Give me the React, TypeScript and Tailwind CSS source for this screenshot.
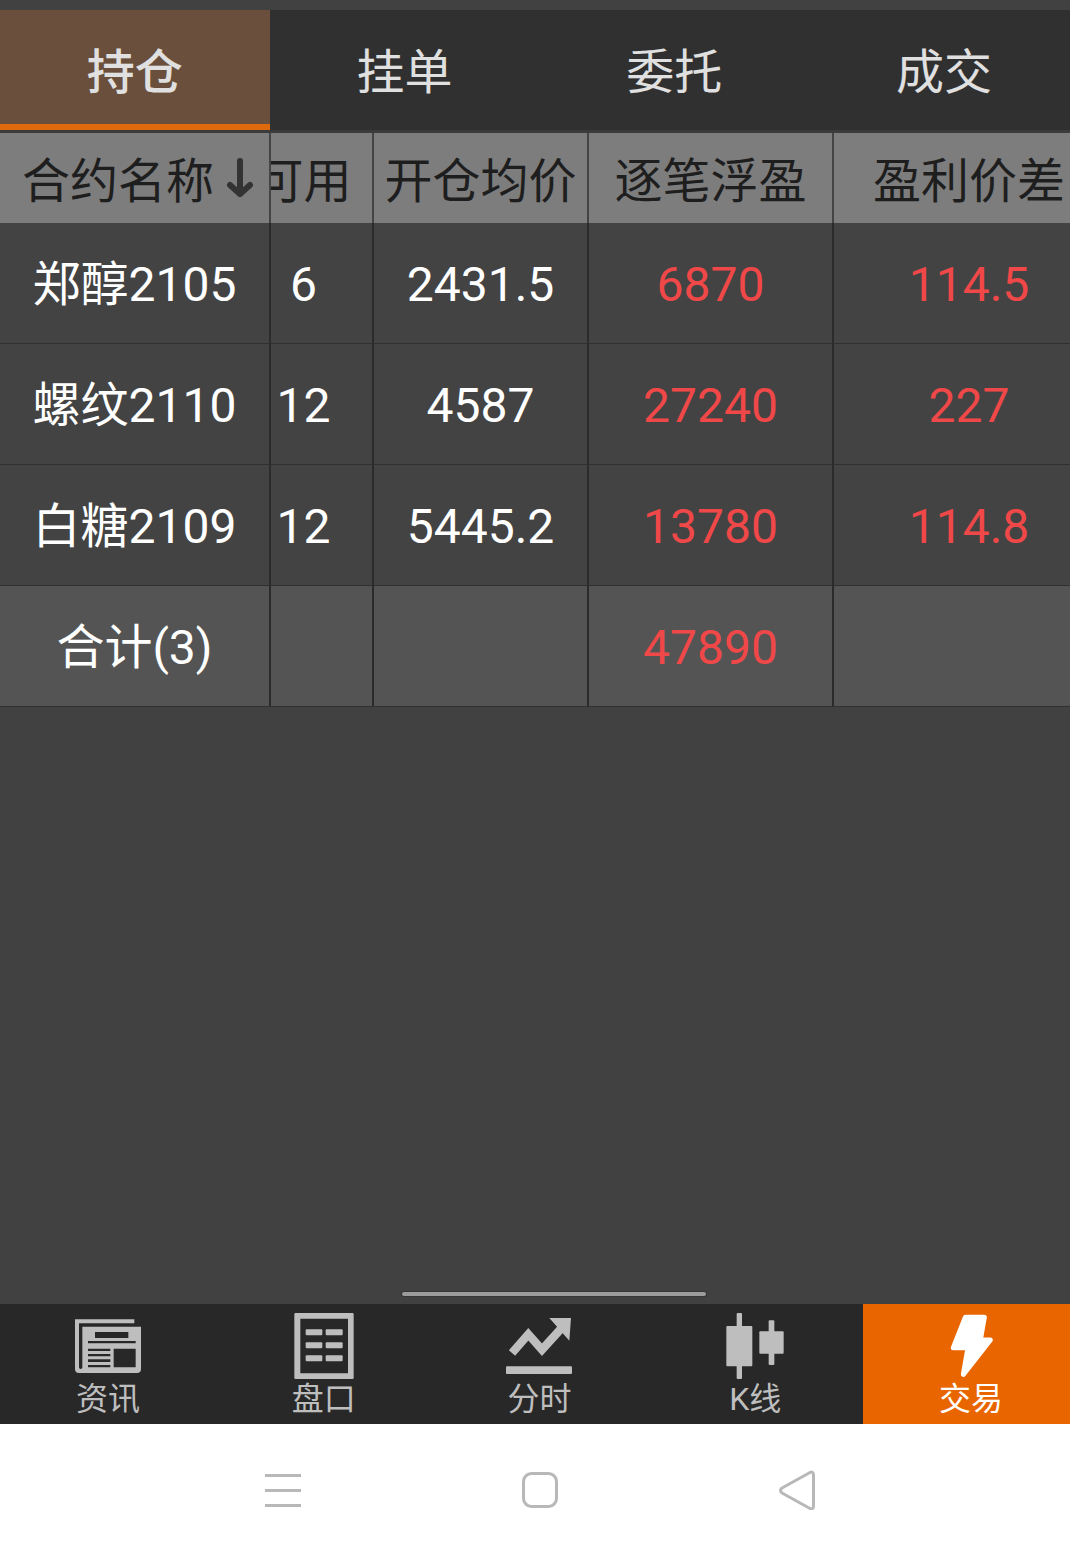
import { useState } from "react";
import type { ReactNode } from "react";

const tabs = ["持仓", "挂单", "委托", "成交"];

const positions = [
  { name: "郑醇2105", available: "6", price: "2431.5", profit: "6870", spread: "114.5" },
  { name: "螺纹2110", available: "12", price: "4587", profit: "27240", spread: "227" },
  { name: "白糖2109", available: "12", price: "5445.2", profit: "13780", spread: "114.8" },
];

const NewsIcon = () => (
  <path
    fillRule="evenodd"
    d="M0 19H178V31H12V163Q12 168 17 168Q22 168 22 163V41H198V168Q198 180 186 180H12Q0 180 0 168ZM60 57V75H160V57ZM39 84V91H182V84ZM39 107V114H106V107ZM39 123V130H106V123ZM39 139V147H106V139ZM39 156V163H106V156ZM116 107V163H182V107Z"
  />
);

const QuoteIcon = () => (
  <>
    <path fillRule="evenodd" d="M14 0H184Q188 0 188 4V194Q188 198 184 198H14Q10 198 10 194V4Q10 0 14 0ZM28 17V181H171V17Z" />
    {[49, 88, 127].map((y) => (
      <g key={y}>
        <rect x="44" y={y} width="50" height="18" rx="3" />
        <rect x="104" y={y} width="51" height="18" rx="3" />
      </g>
    ))}
  </>
);

const TrendIcon = () => (
  <>
    <path d="M18 120L67 64L108 110L168 44" fill="none" stroke="currentColor" strokeWidth="25" />
    <path d="M130 15H195L190 83Z" />
    <rect x="0" y="160" width="198" height="23" rx="3" />
  </>
);

const CandleIcon = () => (
  <>
    <rect x="44" y="0" width="16" height="198" rx="3" />
    <rect x="13" y="39" width="78" height="121" rx="3" />
    <rect x="140" y="22" width="17" height="134" rx="3" />
    <rect x="112" y="55" width="73" height="67" rx="3" />
  </>
);

const TradeIcon = () => (
  <path
    d="M82 13H139L127 81H157L76 184L90 104H46Z"
    stroke="currentColor"
    strokeWidth="15"
    strokeLinejoin="round"
  />
);

const navItems: { label: string; icon: ReactNode }[] = [
  { label: "资讯", icon: <NewsIcon /> },
  { label: "盘口", icon: <QuoteIcon /> },
  { label: "分时", icon: <TrendIcon /> },
  { label: "K线", icon: <CandleIcon /> },
  { label: "交易", icon: <TradeIcon /> },
];

const headCell = "h-[90px] border-r-2 border-[#444444] p-0 pt-2 font-normal";
const cell = "h-[121px] border-r-2 border-b border-r-[#2b2b2b] border-b-[#313131] p-0 pt-1 font-normal";

// The second column is partly scrolled under the contract name column
const ScrolledCell = ({ children }: { children?: ReactNode }) => (
  <div className="flex justify-center overflow-hidden pr-9">
    <span>{children}</span>
  </div>
);

const PositionTable = () => (
  <table className="w-[calc(100%+27px)] table-fixed border-separate border-spacing-0 text-center text-5xl leading-18 whitespace-nowrap">
    <colgroup>
      <col className="w-[271px]" />
      <col className="w-[103px]" />
      <col className="w-[215px]" />
      <col className="w-[245px]" />
      <col />
    </colgroup>
    <thead className="bg-[#7d7d7d] text-[#1e1e1e]">
      <tr>
        <th className={headCell}>
          <button type="button" className="flex items-center gap-3 pl-[22px]">
            合约名称
            <svg viewBox="0 0 28 42" className="mb-2 h-[42px] w-7 text-[#333333]" fill="none" stroke="currentColor" strokeWidth="6" strokeLinecap="round" strokeLinejoin="round" aria-hidden="true">
              <path d="M14 4V37M4 28L14 37L24 28" />
            </svg>
          </button>
        </th>
        <th className={headCell}>
          <ScrolledCell>可用</ScrolledCell>
        </th>
        <th className={headCell}>开仓均价</th>
        <th className={headCell}>逐笔浮盈</th>
        <th className={headCell}>盈利价差</th>
      </tr>
    </thead>
    <tbody className="bg-[#434343] text-white">
      {positions.map((p) => (
        <tr key={p.name}>
          <th scope="row" className={cell}>{p.name}</th>
          <td className={cell}>
            <ScrolledCell>{p.available}</ScrolledCell>
          </td>
          <td className={cell}>{p.price}</td>
          <td className={`${cell} text-[#f04848]`}>{p.profit}</td>
          <td className={`${cell} text-[#f04848]`}>{p.spread}</td>
        </tr>
      ))}
    </tbody>
    <tfoot className="bg-[#545454] text-white">
      <tr>
        <th scope="row" className={cell}>合计(3)</th>
        <td className={cell} />
        <td className={cell} />
        <td className={`${cell} text-[#f04848]`}>47890</td>
        <td className={cell} />
      </tr>
    </tfoot>
  </table>
);

const SystemBar = () => (
  <div className="flex h-[132px] items-center justify-center gap-[221px] bg-white text-[#b8b8b8]">
    <button type="button" aria-label="菜单">
      <svg viewBox="0 0 36 36" className="size-9" stroke="currentColor" strokeWidth="3" aria-hidden="true">
        <path d="M0 3.500H36M0 18.500H36M0 33.500H36" />
      </svg>
    </button>
    <button type="button" aria-label="主页">
      <svg viewBox="0 0 36 36" className="size-9" fill="none" stroke="currentColor" strokeWidth="3" aria-hidden="true">
        <rect x="1.5" y="1.5" width="33" height="33" rx="8" />
      </svg>
    </button>
    <button type="button" aria-label="返回">
      <svg viewBox="0 0 36 40" className="h-10 w-9" fill="none" stroke="currentColor" strokeWidth="3" strokeLinejoin="round" aria-hidden="true">
        <path d="M3 18L31 2.500Q34.500 1 34.500 5V36Q34.500 40 31 38.500L3 23Q0 20.500 3 18Z" />
      </svg>
    </button>
  </div>
);

export default function App() {
  const [activeTab, setActiveTab] = useState("持仓");
  const [activeNav, setActiveNav] = useState("交易");

  return (
    <div className="overflow-hidden bg-[#414141] font-[Roboto,'Noto_Sans_CJK_SC',sans-serif]">
      <div className="-mr-[9px] flex min-h-screen flex-col">
        <div className="grid grid-cols-4 border-t-10 border-b-3 border-t-[#414141] border-b-[#3b3b3b] bg-[#303030]">
          {tabs.map((tab) => (
            <button
              key={tab}
              type="button"
              onClick={() => setActiveTab(tab)}
              className={`h-[120px] border-b-6 pt-3 text-5xl text-[#e0e0e0] ${
                tab === activeTab ? "border-[#e0690c] bg-[#6a503c] font-medium" : "border-transparent"
              }`}
            >
              {tab}
            </button>
          ))}
        </div>

        <PositionTable />

        <div className="flex flex-1 items-end justify-center pb-2 pl-7">
          <div className="h-1 w-[304px] rounded-full bg-[#9b9b9b] ring-1 ring-[#363636]" />
        </div>

        <nav className="grid grid-cols-5 bg-[#282828]">
          {navItems.map((item) => (
            <button
              key={item.label}
              type="button"
              onClick={() => setActiveNav(item.label)}
              className={`flex h-[120px] flex-col items-center pt-[9px] ${
                item.label === activeNav ? "bg-[#e86500] text-white" : "text-[#bebebe]"
              }`}
            >
              <svg viewBox="0 0 198 198" className="size-[66px]" fill="currentColor" aria-hidden="true">
                {item.icon}
              </svg>
              <span className="text-[32px] leading-10">{item.label}</span>
            </button>
          ))}
        </nav>

        <SystemBar />
      </div>
    </div>
  );
}
